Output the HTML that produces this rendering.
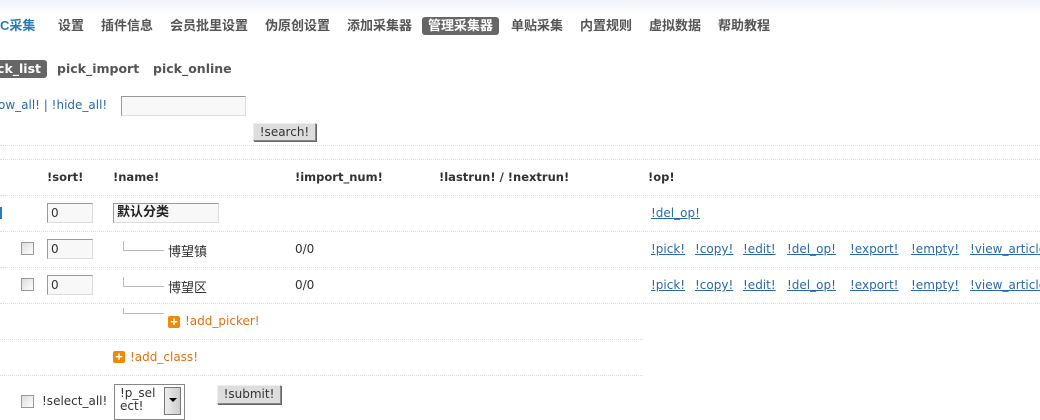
<!DOCTYPE html>
<html><head><meta charset="utf-8"><style>
body{margin:0;width:1040px;height:419px;overflow:hidden;background:#fff;position:relative;font-family:"DejaVu Sans","Noto Sans CJK SC",sans-serif;font-size:12px;color:#333}
.a{position:absolute;white-space:nowrap}
.top{position:absolute;left:0;top:0;width:1040px;height:14px;background:linear-gradient(#eef4fb,#fff)}
.nav{font-size:13px;font-weight:bold;color:#555;top:17px;line-height:18px;font-family:"Liberation Sans","Noto Sans CJK SC",sans-serif}
.act{background:#666;color:#fff;border-radius:3px;padding:0 6px}
.sub{font-size:12.5px;font-weight:bold;color:#555;top:60px;line-height:18px}
.bl{color:#2b6aa8}
.ln{position:absolute;left:0;height:0;border-top:1px dotted #d6dde6}
.in{position:absolute;border:1px solid #999;border-right-color:#ddd;border-bottom-color:#ddd;background:#f8f8f8;box-sizing:border-box;padding-left:3px;font-size:12px;line-height:18px}
.btn{position:absolute;border:1px solid #888;border-top-color:#eee;border-left-color:#eee;background:#ddd;box-sizing:border-box;text-align:center;font-size:12px;line-height:16px;box-shadow:1px 1px 0 #666}
.cb{position:absolute;width:11px;height:11px;border:1px solid #999;background:linear-gradient(135deg,#ddd,#fff)}
.h{font-weight:bold;top:170px;color:#333;font-size:11.5px}
.lk{color:#2b6aa8;text-decoration:underline;position:absolute;white-space:nowrap}
.tr{position:absolute;border-left:1px solid #bbb;border-bottom:1px solid #bbb;width:40px;height:9px}
.pl{position:absolute;width:12px;height:12px;background:#f08a00;border-radius:2px;color:#fff;font-weight:bold;font-size:13px;line-height:12px;text-align:center;font-family:"Liberation Sans",sans-serif}
.or{color:#e56f10}
.cn{font-size:13px}
</style></head><body>
<div class="top"></div>
<div class="a nav" style="left:0;color:#2a7cb5">C采集</div>
<div class="a nav" style="left:58px">设置</div>
<div class="a nav" style="left:101px">插件信息</div>
<div class="a nav" style="left:170px">会员批里设置</div>
<div class="a nav" style="left:265px">伪原创设置</div>
<div class="a nav" style="left:347px">添加采集器</div>
<div class="a nav act" style="left:422px">管理采集器</div>
<div class="a nav" style="left:511px">单贴采集</div>
<div class="a nav" style="left:580px">内置规则</div>
<div class="a nav" style="left:649px">虚拟数据</div>
<div class="a nav" style="left:718px">帮助教程</div>

<div class="a sub" style="left:-6px;width:53px;box-sizing:border-box;text-align:right;padding-right:6px;background:#666;color:#fff;border-radius:3px;overflow:hidden">ck_list</div>
<div class="a sub" style="left:57px">pick_import</div>
<div class="a sub" style="left:153px">pick_online</div>

<div class="a bl" style="left:-2px;top:97px;line-height:17px">ow_all! | !hide_all!</div>
<div class="in" style="left:121px;top:96px;width:125px;height:20px"></div>
<div class="btn" style="left:253px;top:123px;width:63px;height:18px">!search!</div>

<div class="ln" style="top:145px;width:1040px"></div>
<div class="ln" style="top:159px;width:1040px"></div>
<div class="a h" style="left:47px">!sort!</div>
<div class="a h" style="left:113px">!name!</div>
<div class="a h" style="left:295px">!import_num!</div>
<div class="a h" style="left:439px">!lastrun! / !nextrun!</div>
<div class="a h" style="left:648px">!op!</div>
<div class="ln" style="top:195px;width:1040px"></div>

<div class="a" style="left:0;top:207px;width:2px;height:12px;background:#2a7cb5"></div>
<div class="in" style="left:47px;top:203px;width:46px;height:20px">0</div>
<div class="in" style="left:113px;top:203px;width:106px;height:20px;font-weight:bold;color:#222;font-size:13px">默认分类</div>
<div class="lk" style="left:651px;top:206px">!del_op!</div>
<div class="ln" style="top:231px;width:1040px"></div>

<div class="cb" style="left:21px;top:242px"></div>
<div class="in" style="left:47px;top:239px;width:46px;height:20px">0</div>
<div class="tr" style="left:123px;top:241px"></div>
<div class="a cn" style="left:168px;top:241px">博望镇</div>
<div class="a" style="left:295px;top:242px">0/0</div>
<div class="lk" style="left:651px;top:242px">!pick!</div>
<div class="lk" style="left:695px;top:242px">!copy!</div>
<div class="lk" style="left:743px;top:242px">!edit!</div>
<div class="lk" style="left:787px;top:242px">!del_op!</div>
<div class="lk" style="left:850px;top:242px">!export!</div>
<div class="lk" style="left:911px;top:242px">!empty!</div>
<div class="lk" style="left:970px;top:242px">!view_article!</div>
<div class="ln" style="top:267px;width:1040px"></div>

<div class="cb" style="left:21px;top:278px"></div>
<div class="in" style="left:47px;top:275px;width:46px;height:20px">0</div>
<div class="tr" style="left:123px;top:277px"></div>
<div class="a cn" style="left:168px;top:277px">博望区</div>
<div class="a" style="left:295px;top:278px">0/0</div>
<div class="lk" style="left:651px;top:278px">!pick!</div>
<div class="lk" style="left:695px;top:278px">!copy!</div>
<div class="lk" style="left:743px;top:278px">!edit!</div>
<div class="lk" style="left:787px;top:278px">!del_op!</div>
<div class="lk" style="left:850px;top:278px">!export!</div>
<div class="lk" style="left:911px;top:278px">!empty!</div>
<div class="lk" style="left:970px;top:278px">!view_article!</div>
<div class="ln" style="top:303px;width:1040px"></div>

<div class="tr" style="left:123px;top:308px;height:5px"></div>
<div class="pl" style="left:168px;top:316px">+</div>
<div class="a or" style="left:185px;top:314px">!add_picker!</div>
<div class="ln" style="top:339px;width:643px"></div>

<div class="pl" style="left:113px;top:351px">+</div>
<div class="a or" style="left:130px;top:350px">!add_class!</div>
<div class="ln" style="top:375px;width:643px"></div>

<div class="cb" style="left:21px;top:395px"></div>
<div class="a" style="left:42px;top:394px">!select_all!</div>
<div class="a" style="left:114px;top:384px;width:71px;height:36px;border:1px solid #888;background:#fff;box-sizing:border-box"></div>
<div class="a" style="left:120px;top:387px;line-height:13px;font-size:12px;white-space:normal;width:44px">!p_sel ect!</div>
<div class="a" style="left:164px;top:387px;width:17px;height:28px;border:1px solid #777;box-sizing:border-box;background:linear-gradient(90deg,#eee,#ccc)"><div style="position:absolute;left:4px;top:10px;border:4px solid transparent;border-top:4px solid #000;width:0;height:0"></div></div>
<div class="btn" style="left:217px;top:385px;width:64px;height:19px">!submit!</div>
</body></html>
